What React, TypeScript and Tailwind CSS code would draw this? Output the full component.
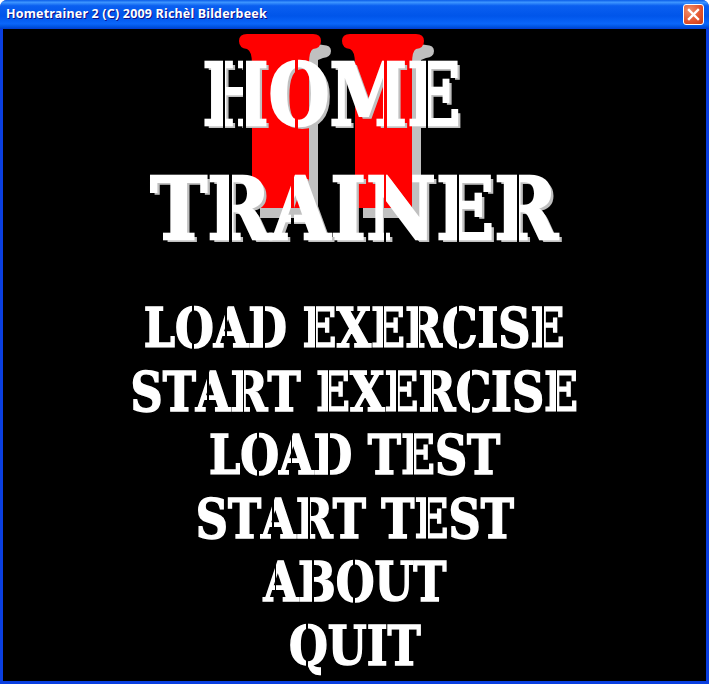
import React from "react";

const MENU = ["LOAD EXERCISE", "START EXERCISE", "LOAD TEST", "START TEST", "ABOUT", "QUIT"];

// Sjabloon-sneden per letter: de letter wordt doorgesneden, de achtergrond blijft zichtbaar
const CUTS: Record<string, string> = {
  O: "[mask-image:linear-gradient(90deg,#000_45%,transparent_45%,transparent_49%,#000_49%)]",
  Q: "[mask-image:linear-gradient(90deg,#000_45%,transparent_45%,transparent_49%,#000_49%)]",
  C: "[mask-image:linear-gradient(90deg,#000_44%,transparent_44%,transparent_48%,#000_48%)]",
  D: "[mask-image:linear-gradient(90deg,#000_40%,transparent_40%,transparent_44%,#000_44%)]",
  B: "[mask-image:linear-gradient(90deg,#000_40%,transparent_40%,transparent_44%,#000_44%)]",
  E: "[mask-image:linear-gradient(90deg,#000_39%,transparent_39%,transparent_42%,#000_42%)]",
  R: "[mask-image:linear-gradient(90deg,#000_38%,transparent_38%,transparent_41%,#000_41%)]",
  H: "[mask-image:linear-gradient(90deg,#000_34%,transparent_34%,transparent_37%,#000_37%,#000_60%,transparent_60%,transparent_63%,#000_63%)]",
  M: "[mask-image:linear-gradient(90deg,#000_68%,transparent_68%,transparent_71%,#000_71%)]",
  N: "[mask-image:linear-gradient(90deg,#000_30%,transparent_30%,transparent_33%,#000_33%)]",
  A: "[mask-image:linear-gradient(90deg,#000_38%,transparent_38%,transparent_41%,#000_41%)]",
};

function Stencil({ text }: { text: string }) {
  return (
    <>
      {text.split("").map((c, i) => (
        <span key={i} className={`-mx-[8px] inline-block whitespace-pre px-[8px] ${CUTS[c] ?? ""}`}>
          {c}
        </span>
      ))}
    </>
  );
}

// De rode "II" achter het logo, met grijze schaduw
function RomanTwo() {
  const bar = (x: number) => (
    <g key={x}>
      <path
        d={`M${x + 70} 24 V12 Q${x + 76} 9 ${x + 84} 11 Q${x + 92} 11 ${x + 92} 17 Q${x + 92} 23 ${x + 84} 24 L${x + 79} 26 V184 H${x + 21} V174 H${x + 70} Z`}
        fill="#c0c0c0"
      />
      <path
        d={`M${x + 8} 0 H${x + 74} Q${x + 82} 0 ${x + 82} 7 Q${x + 82} 14 ${x + 74} 15 Q${x + 70} 17 ${x + 70} 30 V174 H${x + 13} V30 Q${x + 13} 17 ${x + 8} 15 Q${x} 14 ${x} 7 Q${x} 0 ${x + 8} 0 Z`}
        fill="#ff0000"
      />
    </g>
  );
  return (
    <svg className="absolute left-[236px] top-[5px]" width="200" height="195" viewBox="0 0 200 195">
      {[0, 103].map(bar)}
    </svg>
  );
}

export default function App() {
  return (
    <div className="h-[684px] w-[709px] overflow-hidden bg-white font-['Liberation_Sans',sans-serif]">
      <div className="flex h-full flex-col rounded-t-[7px] bg-[#0a3fe0] px-[3px] pb-[3px]">
        {/* Titelbalk */}
        <div className="-mx-[3px] flex h-[29px] items-center justify-between rounded-t-[7px] bg-[linear-gradient(180deg,#0a5ce8_0%,#3d95ff_8%,#0a5ff0_20%,#0055ea_55%,#0a66fa_82%,#0053e0_92%,#003dd0_100%)] pl-[6px] pr-[5px]">
          <span className="font-['Noto_Sans',sans-serif] text-[12.5px] font-bold leading-none tracking-[0.18px] text-white [text-shadow:1px_1px_0_#0f1089]">
            Hometrainer 2 (C) 2009 Richèl Bilderbeek
          </span>
          <div className="flex h-[21px] w-[21px] items-center justify-center rounded-[3px] border border-white bg-[radial-gradient(circle_at_30%_30%,#f0906c,#e2512c_60%,#c63a14)]">
            <svg width="13" height="13" viewBox="0 0 13 13">
              <path d="M2 2 L11 11 M11 2 L2 11" stroke="#fff" strokeWidth="2.4" strokeLinecap="square" />
            </svg>
          </div>
        </div>

        {/* Inhoud */}
        <div className="flex flex-1 flex-col items-center bg-black font-['DejaVu_Serif',serif] font-bold text-white">
          <div className="relative h-[268px] w-full">
            <RomanTwo />
            <div className="relative flex flex-col items-center [-webkit-text-stroke:2.5px_#fff] [text-shadow:4px_3px_0_#c0c0c0]">
              <div className="mt-[9px] ml-[-46px] h-[114px] scale-x-[0.815] whitespace-nowrap text-[86px] leading-[114px]">
                <Stencil text="HOME" />
              </div>
              <div className="h-[114px] scale-x-[0.89] whitespace-nowrap text-[86px] leading-[114px]">
                <Stencil text="TRAINER" />
              </div>
            </div>
          </div>
          <div className="flex flex-col items-center [-webkit-text-stroke:1.6px_#fff]">
            {MENU.map((m) => (
              <div key={m} className="h-[63.6px] scale-x-[0.825] whitespace-nowrap text-[54px] leading-[63.6px]">
                <Stencil text={m} />
              </div>
            ))}
          </div>
        </div>
      </div>
    </div>
  );
}
